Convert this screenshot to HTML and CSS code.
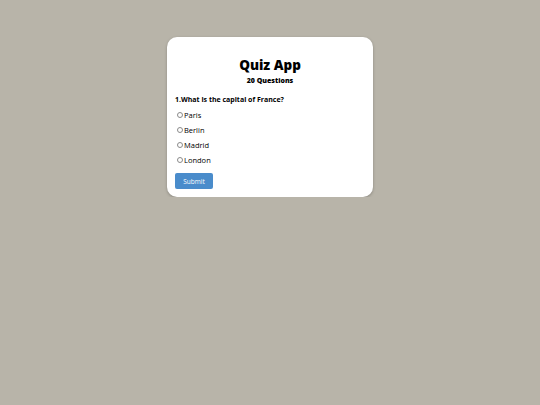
FILE: index.html
```html
<!DOCTYPE html>
<html>
<head>
<meta charset="utf-8">
<link rel="stylesheet" href="styles.css">
</head>
<body>
<div class="card">
  <h1 class="title">Quiz App</h1>
  <p class="count">20 Questions</p>
  <p class="question">1.What is the capital of France?</p>
  <ul class="options">
    <li><label><input type="radio" name="q"><span>Paris</span></label></li>
    <li><label><input type="radio" name="q"><span>Berlin</span></label></li>
    <li><label><input type="radio" name="q"><span>Madrid</span></label></li>
    <li><label><input type="radio" name="q"><span>London</span></label></li>
  </ul>
  <button class="submit">Submit</button>
</div>
</body>
</html>
```

FILE: styles.css
```css
html, body {
  margin: 0;
  padding: 0;
  background: #b8b4a9;
  font-family: "Open Sans", "Noto Sans", sans-serif;
  color: #000;
}
.card {
  box-sizing: border-box;
  width: 206px;
  margin: 37px auto 0;
  padding: 10px 8px 8px;
  background: #fff;
  border-radius: 10px;
  box-shadow: 0 1px 3px rgba(0,0,0,0.25);
}
.title {
  margin: 8px 0 1px;
  font-size: 13.5px;
  line-height: 20px;
  font-weight: 800;
  text-align: center;
}
.count {
  margin: 0;
  font-size: 7px;
  line-height: 10px;
  font-weight: 800;
  text-align: center;
}
.question {
  margin: 9px 0 0;
  font-size: 7px;
  line-height: 10px;
  font-weight: 700;
}
.options {
  list-style: none;
  margin: 0;
  padding: 0;
}
.options li {
  margin-top: 5px;
  font-size: 7.5px;
  line-height: 10px;
}
.options label {
  display: flex;
  align-items: center;
}
.options input {
  appearance: none;
  -webkit-appearance: none;
  box-sizing: border-box;
  width: 6px;
  height: 6px;
  margin: 0 1px 0 2px;
  border: 0.6px solid #8a8a8a;
  border-radius: 50%;
  background: #fff;
}
.submit {
  display: block;
  margin-top: 8px;
  width: 38px;
  height: 16px;
  padding: 0;
  border: none;
  border-radius: 2px;
  background: #4a8ccb;
  color: #fff;
  font-family: inherit;
  font-size: 6.5px;
}
```
